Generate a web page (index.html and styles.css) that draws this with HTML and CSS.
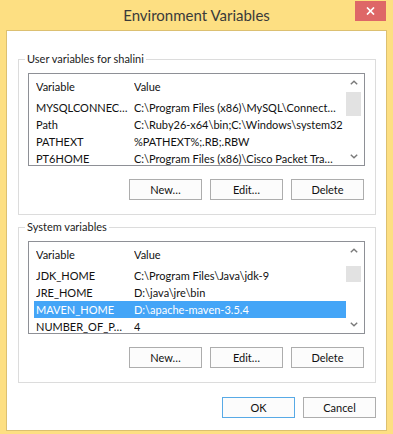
FILE: index.html
```html
<!DOCTYPE html>
<html lang="en">
<head>
    <meta charset="UTF-8">
    <title>Environment Variables</title>
    <link rel="stylesheet" href="styles.css">
</head>
<body>
    <div class="window">
        <div class="titlebar">
            <span></span>
            <span class="title">Environment Variables</span>
            <button class="close-btn" aria-label="Close">
                <svg width="9" height="8" viewBox="0 0 9 8"><path d="M1 0.5 L8 7.5 M8 0.5 L1 7.5" stroke="#fff" stroke-width="1.7" fill="none"/></svg>
            </button>
        </div>

        <div class="client">
            <section class="group">
                <span class="group-label">User variables for shalini</span>
                <div class="listbox">
                    <div class="list-body">
                        <div class="row head"><span class="col-name">Variable</span><span class="col-value">Value</span></div>
                        <div class="row"><span class="col-name">MYSQLCONNEC…</span><span class="col-value">C:\Program Files (x86)\MySQL\Connect…</span></div>
                        <div class="row"><span class="col-name">Path</span><span class="col-value">C:\Ruby26-x64\bin;C:\Windows\system32</span></div>
                        <div class="row"><span class="col-name">PATHEXT</span><span class="col-value">%PATHEXT%;.RB;.RBW</span></div>
                        <div class="row"><span class="col-name">PT6HOME</span><span class="col-value">C:\Program Files (x86)\Cisco Packet Tra…</span></div>
                    </div>
                    <div class="scrollbar">
                        <span class="arrow"><svg width="8" height="5" viewBox="0 0 8 5"><path d="M0.8 4.3 L4 1.2 L7.2 4.3" stroke="#7a7a7a" stroke-width="1.4" fill="none"/></svg></span>
                        <span class="thumb thumb-top"></span>
                        <span class="arrow arrow-down"><svg width="8" height="5" viewBox="0 0 8 5"><path d="M0.8 0.7 L4 3.8 L7.2 0.7" stroke="#7a7a7a" stroke-width="1.4" fill="none"/></svg></span>
                    </div>
                </div>
                <div class="btn-row">
                    <button class="btn">New…</button>
                    <button class="btn">Edit…</button>
                    <button class="btn">Delete</button>
                </div>
            </section>

            <section class="group group-system">
                <span class="group-label">System variables</span>
                <div class="listbox">
                    <div class="list-body">
                        <div class="row head"><span class="col-name">Variable</span><span class="col-value">Value</span></div>
                        <div class="row"><span class="col-name">JDK_HOME</span><span class="col-value">C:\Program Files\Java\jdk-9</span></div>
                        <div class="row"><span class="col-name">JRE_HOME</span><span class="col-value">D:\java\jre\bin</span></div>
                        <div class="row selected"><span class="col-name">MAVEN_HOME</span><span class="col-value">D:\apache-maven-3.5.4</span></div>
                        <div class="row"><span class="col-name">NUMBER_OF_P…</span><span class="col-value">4</span></div>
                    </div>
                    <div class="scrollbar">
                        <span class="arrow"><svg width="8" height="5" viewBox="0 0 8 5"><path d="M0.8 4.3 L4 1.2 L7.2 4.3" stroke="#7a7a7a" stroke-width="1.4" fill="none"/></svg></span>
                        <span class="thumb thumb-mid"></span>
                        <span class="arrow arrow-down"><svg width="8" height="5" viewBox="0 0 8 5"><path d="M0.8 0.7 L4 3.8 L7.2 0.7" stroke="#7a7a7a" stroke-width="1.4" fill="none"/></svg></span>
                    </div>
                </div>
                <div class="btn-row">
                    <button class="btn">New…</button>
                    <button class="btn">Edit…</button>
                    <button class="btn">Delete</button>
                </div>
            </section>

            <div class="btn-row dialog-actions">
                <button class="btn btn-default">OK</button>
                <button class="btn">Cancel</button>
            </div>
        </div>
    </div>
</body>
</html>
```

FILE: styles.css
```css
:root {
    --frame: #fddf82;
    --frame-edge: #dcc071;
    --text: #111;
    --group-border: #dcdcdc;
    --list-border: #8e9096;
    --btn-border: #adadad;
    --btn-bg: #fcfcfc;
    --select: #44a5f7;
}

* {
    box-sizing: border-box;
}

body {
    margin: 0;
    background: var(--frame);
    font-family: Lato, "Open Sans", sans-serif;
    font-size: 11px;
    color: var(--text);
}

.window {
    width: 393px;
    height: 434px;
    display: flex;
    flex-direction: column;
}

.titlebar {
    height: 30px;
    padding: 0 7px;
    display: grid;
    grid-template-columns: 1fr auto 1fr;
}

.title {
    font-size: 15px;
    line-height: 31px;
    color: #3a3a3a;
}

.close-btn {
    justify-self: end;
    width: 31px;
    height: 20px;
    margin-top: 1px;
    border: 0;
    padding: 0;
    background: #de6767;
    display: flex;
    align-items: center;
    justify-content: center;
}

.client {
    margin: 0 6px;
    height: 401px;
    border: 1px solid var(--frame-edge);
    background: #fff;
    padding: 28px 10px 12px 11px;
}

.group {
    position: relative;
    border: 1px solid var(--group-border);
    padding: 13px 10px 14px 9px;
}

.group-system {
    margin-top: 12px;
}

.group-label {
    position: absolute;
    top: -8px;
    left: 6px;
    padding: 0 2px;
    line-height: 14px;
    background: #fff;
    color: #222;
}

.listbox {
    height: 93px;
    border: 1px solid var(--list-border);
    display: flex;
    overflow: hidden;
}

.list-body {
    flex: 1;
    padding-left: 5px;
    min-width: 0;
}

.row {
    display: flex;
    height: 17px;
    line-height: 17px;
    padding-left: 2px;
    white-space: nowrap;
}

.row.head {
    height: 25px;
    line-height: 25px;
}

.row.selected {
    background: var(--select);
    color: #fff;
}

.col-name {
    width: 98px;
    flex: none;
    overflow: hidden;
}

.col-value {
    flex: 1;
    overflow: hidden;
}

.scrollbar {
    width: 18px;
    padding-right: 3px;
    display: flex;
    flex-direction: column;
}

.arrow {
    height: 17px;
    display: flex;
    align-items: center;
    justify-content: center;
}

.arrow-down {
    margin-top: auto;
}

.thumb {
    background: #e2e2e2;
}

.thumb-top {
    margin-top: 1px;
    height: 24px;
}

.thumb-mid {
    margin-top: 7px;
    height: 16px;
}

.btn-row {
    display: flex;
    justify-content: flex-end;
    gap: 8px;
    margin-top: 13px;
    padding-right: 1px;
}

.btn {
    width: 73px;
    height: 21px;
    border: 1px solid var(--btn-border);
    background: var(--btn-bg);
    font-family: inherit;
    font-size: 11px;
    color: var(--text);
    padding: 0;
}

.btn-default {
    border-color: #58aae6;
}

.dialog-actions {
    margin-top: 14px;
    padding-right: 0;
}
```
